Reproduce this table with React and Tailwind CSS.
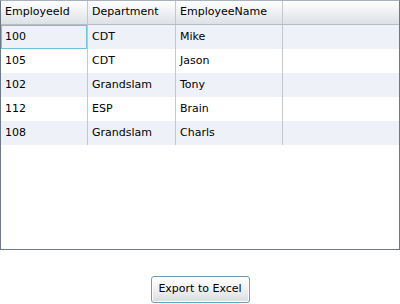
import React from 'react';

const employees = [
  { id: '100', dept: 'CDT', name: 'Mike' },
  { id: '105', dept: 'CDT', name: 'Jason' },
  { id: '102', dept: 'Grandslam', name: 'Tony' },
  { id: '112', dept: 'ESP', name: 'Brain' },
  { id: '108', dept: 'Grandslam', name: 'Charls' },
];

const font = { fontFamily: '"DejaVu Sans", Verdana, sans-serif' };

export default function App() {
  return (
    <div className="w-[400px] h-[304px] bg-white text-[11px] text-black" style={font}>
      {/* Grid */}
      <div className="h-[250px] border border-[#6b7a86] border-t-[#a9b2ba] bg-white">
        <div className="flex h-[24px] border-b border-[#b6bcc3] bg-gradient-to-b from-white to-[#dde1e6]">
          <div className="w-[87px] border-r border-[#c4c8cc] pl-[4px] flex items-center">EmployeeId</div>
          <div className="w-[88px] border-r border-[#c4c8cc] pl-[4px] flex items-center">Department</div>
          <div className="w-[107px] border-r border-[#c4c8cc] pl-[4px] flex items-center">EmployeeName</div>
          <div className="flex-1" />
        </div>
        {employees.map((e, i) => (
          <div key={e.id} className={`flex h-[24px] ${i % 2 === 0 ? 'bg-[#eef2f8]' : 'bg-white'}`}>
            <div className="w-[87px] border-r border-[#c4c8cc] flex">
              {i === 0 ? (
                <div className="flex-1 border border-[#6ec4dc] pl-[3px] flex items-center">{e.id}</div>
              ) : (
                <div className="flex-1 pl-[4px] flex items-center">{e.id}</div>
              )}
            </div>
            <div className="w-[88px] border-r border-[#c4c8cc] pl-[4px] flex items-center">{e.dept}</div>
            <div className="w-[107px] border-r border-[#c4c8cc] pl-[4px] flex items-center">{e.name}</div>
            <div className="flex-1" />
          </div>
        ))}
      </div>

      <div className="flex justify-center pt-[26px]">
        <button className="w-[99px] h-[27px] rounded-[3px] border border-[#6a9fb4] bg-gradient-to-b from-white via-[#f0f0f0] to-[#d8dde2] text-[11px] shadow-[inset_0_0_0_1px_#ffffff]" style={font}>
          Export to Excel
        </button>
      </div>
    </div>
  );
}
